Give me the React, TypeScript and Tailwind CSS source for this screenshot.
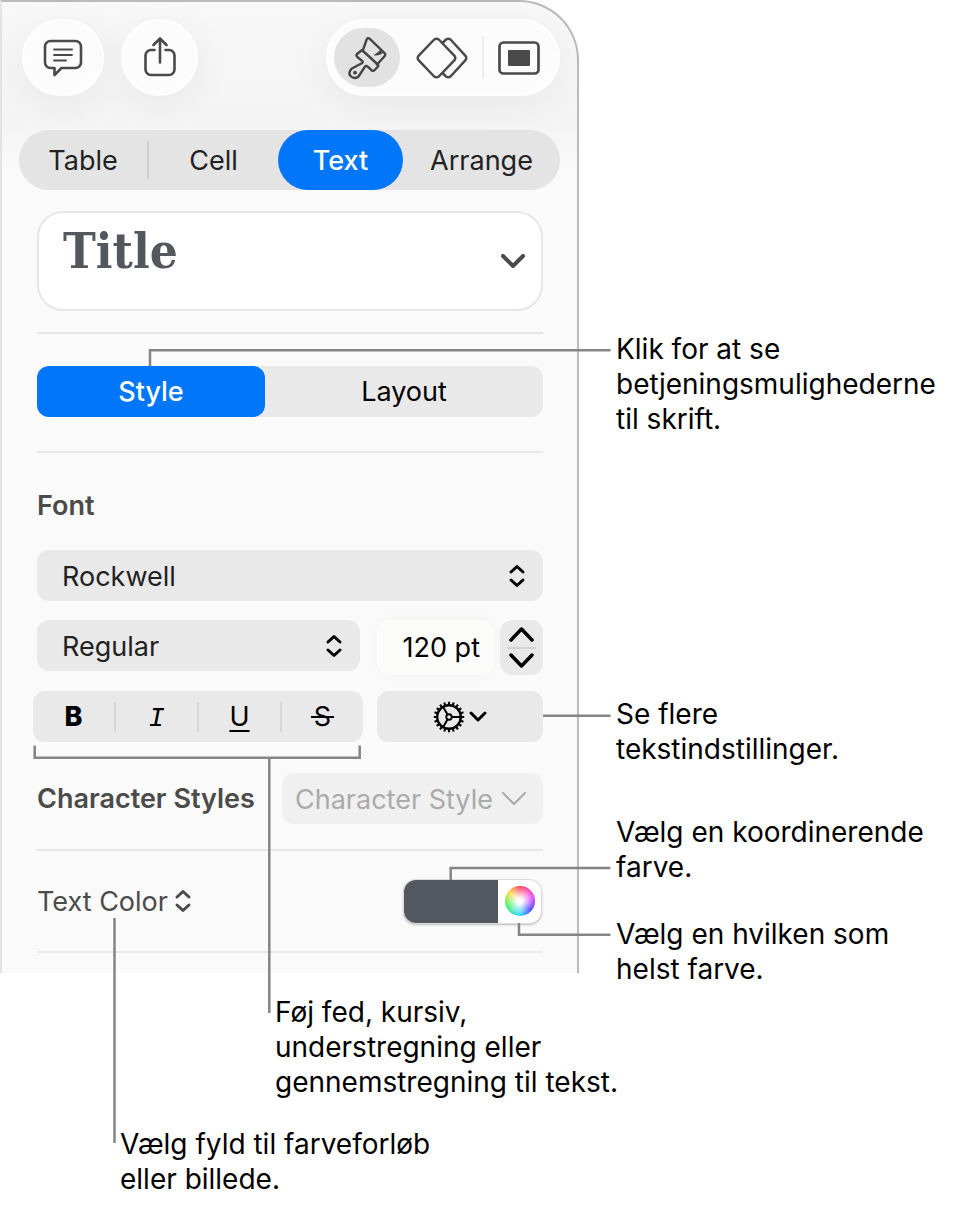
import { useState } from "react";
import type { ReactNode } from "react";
import clsx from "clsx";

const tabs = [
  { label: "Table", width: "w-[130px]" },
  { label: "Cell", width: "w-[129px]" },
  { label: "Text", width: "w-[125px]" },
  { label: "Arrange", width: "flex-1" },
];

const charStyles = [
  { label: "Bold", icon: <span className="font-extrabold">B</span> },
  { label: "Italic", icon: <span className="font-mono italic">I</span> },
  { label: "Underline", icon: <span className="underline decoration-2 underline-offset-4">U</span> },
  { label: "Strikethrough", icon: <StrikeIcon /> },
];

const sideNotes = [
  { text: "Klik for at se\nbetjeningsmulighederne\ntil skrift.", spacing: "mt-[332px]" },
  { text: "Se flere\ntekstindstillinger.", spacing: "mt-[260px]" },
  { text: "Vælg en koordinerende\nfarve.", spacing: "mt-12" },
  { text: "Vælg en hvilken som\nhelst farve.", spacing: "mt-8" },
];

function CommentIcon() {
  return (
    <svg width="40" height="38" viewBox="0 0 40 38" fill="none" stroke="#4a4a4a" strokeLinecap="round" strokeLinejoin="round">
      <path strokeWidth="2.6" d="M7.5 2H32.5a5.5 5.5 0 0 1 5.5 5.5V23.5a5.5 5.5 0 0 1-5.5 5.5H18.5L11.5 36V29H7.5A5.5 5.5 0 0 1 2 23.5V7.5A5.5 5.5 0 0 1 7.5 2Z" />
      <path strokeWidth="1.9" d="M11 10.5H29M11 16H29M11 21.5H23" />
    </svg>
  );
}

function ShareIcon() {
  return (
    <svg width="34" height="42" viewBox="0 0 34 42" fill="none" stroke="#4a4a4a" strokeWidth="2.6" strokeLinecap="round" strokeLinejoin="round">
      <path d="M11.5 13H8A5.5 5.5 0 0 0 2.5 18.5V32.5A5.5 5.5 0 0 0 8 38H26A5.5 5.5 0 0 0 31.5 32.5V18.5A5.5 5.5 0 0 0 26 13H22.5" />
      <path d="M17 25.5V1.8M10.5 8L17 1.5L23.5 8" />
    </svg>
  );
}

function BrushIcon() {
  return (
    <svg width="40" height="44" viewBox="0 0 40 44" fill="none" stroke="#444" strokeWidth="2.4" strokeLinecap="round" strokeLinejoin="round">
      <path d="M15.5 15Q17.8 9 19.5 3.8Q20.5 1 22.8 2.8L37.5 17Q39 18.8 37.3 20.5L30 28.5" />
      <path d="M14.5 14.5L10 18Q8.8 19.5 10.3 21L14.8 24.6Q16.5 26 14.8 27.2L4.500 32.800Q0.800 36.300 3.500 40Q7.500 43.800 11.500 40.500L17.600 31.200Q19 29 20.800 30.700L24.500 34.200Q26.200 35.500 27.700 34L31 30.500Q31.800 29.500 30.800 28.500L15.500 14.500Q15 14 14.500 14.500Z" />
      <path fill="#444" strokeWidth="1" d="M34 13.500Q32 16.500 27.500 19Q30.500 19.500 34.800 17.500Z" />
      <circle cx="8" cy="36.7" r="1.9" fill="#444" stroke="none" />
    </svg>
  );
}

function DiamondsIcon() {
  return (
    <svg width="52" height="42" viewBox="0 0 52 42" fill="none" stroke="#4a4a4a" strokeWidth="2.5" strokeLinecap="round" strokeLinejoin="round">
      <path d="M18.2 2.5L2.5 18.8Q1 21 2.5 23.2L18.2 39.5Q20.5 41 22.8 39.5L38.5 23.2Q40 21 38.5 18.8L22.8 2.5Q20.5 1 18.2 2.5Z" />
      <path d="M26.5 6L30 2.5Q32.3 1 34.5 2.5L49.5 18.8Q51 21 49.5 23.2L34.5 39.5Q32.3 41 30 39.5L26.5 36" />
    </svg>
  );
}

function SlideIcon() {
  return (
    <svg width="42" height="34" viewBox="0 0 42 34" fill="none">
      <rect x="1.5" y="1.5" width="39" height="31" rx="4" stroke="#4a4a4a" strokeWidth="2.7" />
      <rect x="10" y="9" width="22" height="16" rx="1" fill="#4a4a4a" />
    </svg>
  );
}

function GearIcon() {
  const teeth = Array.from({ length: 20 }, (_, i) => (i * Math.PI) / 10);
  return (
    <svg width="32" height="32" viewBox="-16 -16 32 32" fill="none" stroke="#000">
      <circle r="11.8" strokeWidth="2.4" />
      <circle r="2.7" strokeWidth="1.9" />
      <path strokeWidth="2" d="M3 0H11.5M-1.5 -2.6L-5.8 -10M-1.5 2.6L-5.8 10" />
      <path
        strokeWidth="2.1"
        d={teeth.map((a) => `M${12.5 * Math.cos(a)} ${12.5 * Math.sin(a)}L${15.2 * Math.cos(a)} ${15.2 * Math.sin(a)}`).join("")}
      />
    </svg>
  );
}

function StrikeIcon() {
  return (
    <span className="relative inline-block px-[3px]">
      S
      <span className="absolute inset-x-0 top-[14px] h-[2px] bg-black" />
    </span>
  );
}

function UpDownIcon({ className }: { className?: string }) {
  return (
    <svg width="18" height="24" viewBox="0 0 18 24" fill="none" stroke="currentColor" strokeWidth="3" strokeLinecap="round" strokeLinejoin="round" className={className}>
      <path d="M3 8L9 2.5L15 8M3 16L9 21.5L15 16" />
    </svg>
  );
}

function Chevron({ w, h, stroke = 3 }: { w: number; h: number; stroke?: number }) {
  return (
    <svg width={w} height={h} viewBox={`0 0 ${w} ${h}`} fill="none" stroke="currentColor" strokeWidth={stroke} strokeLinecap="round" strokeLinejoin="round">
      <path d={`M2 2L${w / 2} ${h - 2}L${w - 2} 2`} />
    </svg>
  );
}

function Select({ label, options, className }: { label: string; options: string[]; className: string }) {
  return (
    <div className={clsx("relative flex items-center", className)}>
      <select aria-label={label} className="h-[51px] w-full appearance-none rounded-xl bg-[#e9e9e9] pt-1 pr-12 pl-[25px] text-[#222]">
        {options.map((o) => (
          <option key={o}>{o}</option>
        ))}
      </select>
      <UpDownIcon className="pointer-events-none absolute right-[17px]" />
    </div>
  );
}

function Note({ className, children }: { className: string; children: ReactNode }) {
  return <p className={clsx("text-[28px] leading-[35px] whitespace-pre text-black", className)}>{children}</p>;
}

function Toolbar() {
  const round = "flex h-[77px] items-center rounded-full border-2 border-white bg-[#fcfcfc] shadow-[0_8px_40px_rgba(0,0,0,0.06)]";
  return (
    <div className="flex pr-[17px] pl-5">
      <button aria-label="Comment" className={clsx(round, "w-[82px] justify-center")}>
        <CommentIcon />
      </button>
      <button aria-label="Share" className={clsx(round, "ml-[17px] w-[77px] justify-center")}>
        <ShareIcon />
      </button>
      <div className={clsx(round, "ml-auto w-[234px] pl-[6px]")}>
        <button aria-label="Format" className="flex h-[59px] w-[66px] items-center justify-center rounded-full bg-[#e2e2e2]">
          <BrushIcon />
        </button>
        <button aria-label="Animate" className="ml-4">
          <DiamondsIcon />
        </button>
        <span className="mx-[14px] h-[43px] w-[2px] bg-[#eee]" />
        <button aria-label="Document">
          <SlideIcon />
        </button>
      </div>
    </div>
  );
}

function Inspector() {
  const [tab, setTab] = useState("Text");
  const [mode, setMode] = useState("Style");
  const [size, setSize] = useState("120 pt");

  return (
    <section className="rounded-tr-[60px] border-t-2 border-r-2 border-l-2 border-t-[#bbb] border-r-[#bbb] border-l-[#e3e3e3] bg-[#fafafa] bg-[linear-gradient(#f8f8f8,#f4f4f4_120px,#fafafa_170px)] pt-[17px] pb-5 text-[27px]">
      <Toolbar />

      <div className="mt-[34px] mr-[17px] ml-[17px] flex h-[60px] items-center rounded-full bg-[#e4e4e4]">
        {tabs.map((t) => (
          <button
            key={t.label}
            onClick={() => setTab(t.label)}
            className={clsx(
              "flex h-full items-center justify-center",
              t.width,
              tab === t.label ? "rounded-full bg-[#0077fb] font-medium text-white" : "text-[#222]"
            )}
          >
            <span className="flex-1 pt-[2px]">{t.label}</span>
            {t.label === "Table" && <span className="h-[38px] w-[2px] bg-[#cfcfcf]" />}
          </button>
        ))}
      </div>

      <div className="pr-[34px] pl-[35px]">
        <button className="mt-[21px] flex h-[100px] w-full items-start justify-between rounded-[26px] border-2 border-[#e7e7e7] bg-white pr-4 pl-6 text-[#4a4a4a]">
          <span className="mt-2 font-['DejaVu_Serif_Condensed','DejaVu_Serif',serif] text-[49px] leading-[60px] font-bold text-[#53585f]">
            Title
          </span>
          <span className="mt-[41px]">
            <Chevron w={24} h={14} stroke={4} />
          </span>
        </button>

        <hr className="mt-[21px] border-t-2 border-[#e5e5e5]" />

        <div className="mt-8 flex h-[51px] rounded-xl bg-[#e9e9e9]">
          {["Style", "Layout"].map((m) => (
            <button
              key={m}
              onClick={() => setMode(m)}
              className={clsx(
                "rounded-xl pt-[2px]",
                m === "Style" ? "w-[228px]" : "flex-1",
                mode === m ? "bg-[#0077fb] font-medium text-white" : "text-black"
              )}
            >
              {m}
            </button>
          ))}
        </div>

        <hr className="mt-[34px] border-t-2 border-[#e8e8e8]" />

        <h2 className="mt-[35px] leading-[36px] font-semibold text-[#4b4b4b]">Font</h2>

        <Select label="Font family" options={["Rockwell"]} className="mt-[26px] w-full" />

        <div className="mt-[19px] flex items-start">
          <Select label="Typeface" options={["Regular"]} className="w-[323px]" />
          <input
            aria-label="Font size"
            value={size}
            onChange={(e) => setSize(e.target.value)}
            className="ml-[17px] h-[55px] w-[117px] rounded-xl bg-[#fcfcfb] pr-[14px] text-right text-black shadow-[0_0_14px_rgba(0,0,0,0.03)]"
          />
          <div className="ml-auto flex h-[55px] w-[43px] flex-col items-center justify-between rounded-xl bg-[#e9e9e9] py-[7px]">
            <button aria-label="Increase size" className="rotate-180">
              <Chevron w={25} h={15} stroke={3.5} />
            </button>
            <span className="h-[2px] w-[29px] bg-[#d2d2d2]" />
            <button aria-label="Decrease size">
              <Chevron w={25} h={15} stroke={3.5} />
            </button>
          </div>
        </div>

        <div className="mt-4 -ml-1 flex h-[51px]">
          <div className="flex w-[330px] items-center rounded-xl bg-[#e9e9e9]">
            {charStyles.map((s, i) => (
              <button
                key={s.label}
                aria-label={s.label}
                className={clsx("h-[30px] flex-1 leading-[30px] text-black", i > 0 && "border-l-2 border-[#d6d6d6]")}
              >
                {s.icon}
              </button>
            ))}
          </div>
          <button aria-label="Advanced options" className="ml-[14px] flex flex-1 items-center justify-center gap-1 rounded-xl bg-[#e9e9e9] text-black">
            <GearIcon />
            <Chevron w={18} h={11} />
          </button>
        </div>

        <div className="mt-[31px] flex items-center justify-between">
          <label htmlFor="character-style" className="pt-[2px] font-semibold whitespace-nowrap text-[#4b4b4b]">
            Character Styles
          </label>
          <div className="relative flex w-[261px] items-center text-[#aaa]">
            <select
              id="character-style"
              disabled
              className="h-[51px] w-full appearance-none rounded-xl bg-[#f0f0f0] pt-[3px] pl-[13px] text-[#aaa] opacity-100"
            >
              <option>Character Style</option>
            </select>
            <span className="pointer-events-none absolute right-4">
              <Chevron w={26} h={15} stroke={2} />
            </span>
          </div>
        </div>

        <hr className="mt-[25px] border-t-2 border-[#e8e8e8]" />

        <div className="mt-7 flex h-[44px] items-center justify-between">
          <div className="relative flex items-center text-[#4b4b4b]">
            <select aria-label="Text fill" className="appearance-none pt-[2px] pr-6">
              <option>Text Color</option>
            </select>
            <UpDownIcon className="pointer-events-none absolute right-0" />
          </div>
          <div className="mr-[2px] flex h-[43px] w-[137px] overflow-hidden rounded-xl bg-white shadow-[0_0_0_1px_#ddd,0_1px_2px_1px_#bbb]">
            <button aria-label="Matching color" className="w-[94px] bg-[#53575f]" />
            <button aria-label="Any color" className="flex flex-1 items-center justify-center">
              <span className="size-[30px] rounded-full bg-[radial-gradient(circle,white_10%,transparent_72%),conic-gradient(#ff3b5c,#e83cf0_70deg,#4038ff_130deg,#22d8ff_180deg,#3cf05a_250deg,#ffd83c_310deg,#ff3b5c)]" />
            </button>
          </div>
        </div>

        <hr className="mt-[28px] border-t-2 border-[#e8e8e8]" />
      </div>
    </section>
  );
}

export default function App() {
  return (
    <main className="relative bg-white pb-3 font-['Inter',sans-serif]">
      <div className="flex items-start">
        <div className="w-[579px] shrink-0">
          <Inspector />
          <Note className="mt-[22px] ml-[275px]">{"Føj fed, kursiv,\nunderstregning eller\ngennemstregning til tekst."}</Note>
          <Note className="mt-[27px] ml-[120px]">{"Vælg fyld til farveforløb\neller billede."}</Note>
        </div>
        <div className="ml-[37px]">
          {sideNotes.map((n) => (
            <Note key={n.text} className={n.spacing}>
              {n.text}
            </Note>
          ))}
        </div>
      </div>

      {/* leader lines from the notes to the controls */}
      <svg className="pointer-events-none absolute top-0 left-0" width="620" height="1160" viewBox="0 0 620 1160" fill="none" stroke="#858585" strokeWidth="2.5">
        <path d="M150 366V350.3H610.5" />
        <path d="M543 715.7H610.5" />
        <path d="M34.7 745.5V757.7H359.7V745.5M269.3 757.7V1013" />
        <path d="M450.7 880V868H610.5" />
        <path d="M519 923V934.7H610.5" />
        <path d="M114.5 918V1143" />
      </svg>
    </main>
  );
}
